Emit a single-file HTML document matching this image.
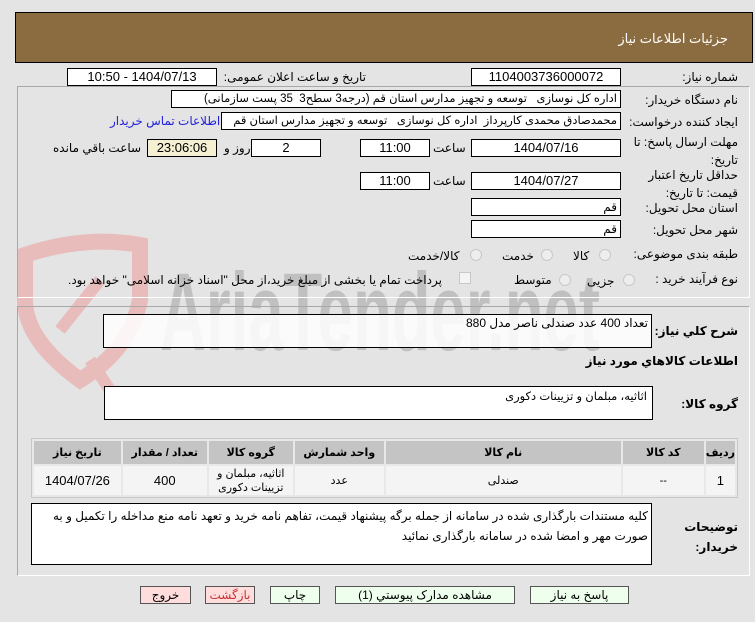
<!DOCTYPE html>
<html><head><meta charset="utf-8"><style>
*{box-sizing:border-box;margin:0;padding:0}
body{width:755px;height:622px;background:#e4e4e4;font-family:"Liberation Sans","DejaVu Sans",sans-serif;font-size:11px;color:#000;position:relative;overflow:hidden;direction:rtl}
.a{position:absolute;white-space:nowrap}
.inp{position:absolute;background:#fff;border:1px solid #000;height:18px;line-height:16px;text-align:center;font-size:11.5px;overflow:hidden;white-space:nowrap}
.num{font-size:13px}
.lbl{position:absolute;white-space:nowrap;font-size:12px;letter-spacing:-0.3px}
.panel{position:absolute;left:17px;width:733px;border:1px solid #a8a8a8;border-right-color:#fff;border-bottom-color:#fff}
table{border-collapse:separate;border-spacing:2px}
td,th{text-align:center;font-size:11px}
th{background:#c4c4c4;height:23px;font-weight:bold}
td{background:#f4f4f4;height:29px}
.btn{position:absolute;top:586px;height:18px;border:1px solid #555;text-align:center;line-height:16px;font-size:12px}
.rad{position:absolute;width:12px;height:12px;border-radius:50%;border:1px solid #c8c8c8;background:#eee}
</style></head><body>
<svg class="a" style="left:0;top:0" width="755" height="622">
<path d="M25 255 Q85 235 140 245 L140 300 Q130 350 80 380 Q25 340 25 300Z" fill="none" stroke="#e9bcbc" stroke-width="16"/>
<path d="M60 330 L100 280 M90 360 L110 390" stroke="#e9bcbc" stroke-width="12"/>
<text x="160" y="350" font-family="Liberation Sans" font-size="110" font-weight="bold" fill="#c0c0c0" textLength="440" lengthAdjust="spacingAndGlyphs" direction="ltr">AriaTender.net</text>
</svg>
<div class="a" style="left:15px;top:12px;width:738px;height:51px;background:#8b6b40;border:1px solid #000"></div>
<div class="a" style="right:27px;top:31px;color:#fff;font-size:13px">جزئیات اطلاعات نیاز</div>
<div class="panel" style="top:86px;height:212px"></div>
<div class="panel" style="top:306px;height:270px"></div>

<div class="lbl" style="right:17px;top:70px">شماره نیاز:</div>
<div class="inp num" style="left:471px;top:68px;width:150px">1104003736000072</div>
<div class="lbl" style="right:389px;top:70px">تاریخ و ساعت اعلان عمومی:</div>
<div class="inp num" style="left:67px;top:68px;width:150px">1404/07/13 - 10:50</div>

<div class="lbl" style="right:17px;top:93px">نام دستگاه خریدار:</div>
<div class="inp" style="left:171px;top:90px;width:450px;text-align:right;padding-right:3px">اداره کل نوسازی &nbsp; توسعه و تجهیز مدارس استان قم (درجه3 سطح3 &nbsp;35 پست سازمانی)</div>

<div class="lbl" style="right:17px;top:115px">ایجاد کننده درخواست:</div>
<div class="inp" style="left:221px;top:112px;width:400px;text-align:right;padding-right:3px">محمدصادق محمدی کارپرداز &nbsp;اداره کل نوسازی &nbsp; توسعه و تجهیز مدارس استان قم</div>
<div class="lbl" style="left:110px;top:114px;color:#2222dd">اطلاعات تماس خریدار</div>

<div class="lbl" style="right:17px;top:133px;line-height:18px;text-align:right">مهلت ارسال پاسخ: تا<br>تاریخ:</div>
<div class="inp num" style="left:471px;top:139px;width:150px">1404/07/16</div>
<div class="lbl" style="left:433px;top:141px">ساعت</div>
<div class="inp num" style="left:360px;top:139px;width:70px">11:00</div>
<div class="inp num" style="left:251px;top:139px;width:70px">2</div>
<div class="lbl" style="left:224px;top:141px">روز و</div>
<div class="inp num" style="left:147px;top:139px;width:70px;background:#f5f0d2">23:06:06</div>
<div class="lbl" style="left:53px;top:141px">ساعت باقي مانده</div>

<div class="lbl" style="right:17px;top:166px;line-height:18px;text-align:right">حداقل تاریخ اعتبار<br>قیمت: تا تاریخ:</div>
<div class="inp num" style="left:471px;top:172px;width:150px">1404/07/27</div>
<div class="lbl" style="left:433px;top:174px">ساعت</div>
<div class="inp num" style="left:360px;top:172px;width:70px">11:00</div>

<div class="lbl" style="right:17px;top:201px">استان محل تحویل:</div>
<div class="inp" style="left:471px;top:198px;width:150px;text-align:right;padding-right:3px;font-size:12px">قم</div>
<div class="lbl" style="right:17px;top:223px">شهر محل تحویل:</div>
<div class="inp" style="left:471px;top:220px;width:150px;text-align:right;padding-right:3px;font-size:12px">قم</div>

<div class="lbl" style="right:17px;top:247px">طبقه بندی موضوعی:</div>
<div class="rad" style="left:599px;top:249px"></div><div class="lbl" style="left:573px;top:249px">کالا</div>
<div class="rad" style="left:541px;top:249px"></div><div class="lbl" style="left:502px;top:249px">خدمت</div>
<div class="rad" style="left:470px;top:249px"></div><div class="lbl" style="left:408px;top:249px">کالا/خدمت</div>

<div class="lbl" style="right:17px;top:272px">نوع فرآیند خرید :</div>
<div class="rad" style="left:623px;top:274px"></div><div class="lbl" style="left:587px;top:274px">جزیی</div>
<div class="rad" style="left:559px;top:274px"></div><div class="lbl" style="left:514px;top:273px">متوسط</div>
<div class="a" style="left:459px;top:272px;width:12px;height:12px;border:1px solid #c8c8c8;background:#f4f4f4"></div>
<div class="lbl" style="left:68px;top:273px">پرداخت تمام یا بخشی از مبلغ خرید،از محل "اسناد خزانه اسلامی" خواهد بود.</div>

<div class="lbl" style="right:17px;top:324px;font-weight:bold">شرح کلي نیاز:</div>
<div class="inp" style="left:103px;top:314px;width:549px;height:34px;text-align:right;padding-right:3px;background:rgba(255,255,255,0.85);font-size:12px">تعداد 400 عدد صندلی ناصر مدل 880</div>
<div class="lbl" style="right:17px;top:354px;font-weight:bold">اطلاعات کالاهاي مورد نیاز</div>
<div class="lbl" style="right:17px;top:397px;font-weight:bold">گروه کالا:</div>
<div class="inp" style="left:104px;top:386px;width:549px;height:34px;text-align:right;padding-right:5px;padding-top:2px">اثاثیه، مبلمان و تزیینات دکوری</div>

<div class="a" style="left:31px;top:438px;width:707px;height:60px;border:1px solid #c8c8c8;background:#e8e8e8">
<table style="width:705px;direction:rtl"><tr>
<th style="width:26px">ردیف</th><th style="width:81px">کد کالا</th><th style="width:235px">نام کالا</th><th style="width:89px">واحد شمارش</th><th style="width:84px">گروه کالا</th><th style="width:84px">تعداد / مقدار</th><th>تاریخ نیاز</th></tr>
<tr><td class="num">1</td><td>--</td><td>صندلی</td><td>عدد</td><td style="line-height:14px">اثاثیه، مبلمان و<br>تزیینات دکوری</td><td class="num">400</td><td class="num">1404/07/26</td></tr></table></div>

<div class="lbl" style="right:17px;top:517px;font-weight:bold;line-height:20px;text-align:right">توضیحات<br>خریدار:</div>
<div class="inp" style="left:31px;top:503px;width:621px;height:62px;text-align:right;padding:2px 3px;white-space:normal;line-height:20px;font-size:12px">کلیه مستندات بارگذاری شده در سامانه از جمله برگه پیشنهاد قیمت، تفاهم نامه خرید و تعهد نامه منع مداخله را تکمیل و به صورت مهر و امضا شده در سامانه بارگذاری نمائید</div>

<div class="btn" style="left:140px;width:51px;background:#fdd">خروج</div>
<div class="btn" style="left:205px;width:50px;background:#fdd;color:#c33">بازگشت</div>
<div class="btn" style="left:270px;width:50px;background:#efe">چاپ</div>
<div class="btn" style="left:335px;width:180px;background:#efe">مشاهده مدارک پیوستي (1)</div>
<div class="btn" style="left:530px;width:99px;background:#efe">پاسخ به نیاز</div>
</body></html>
